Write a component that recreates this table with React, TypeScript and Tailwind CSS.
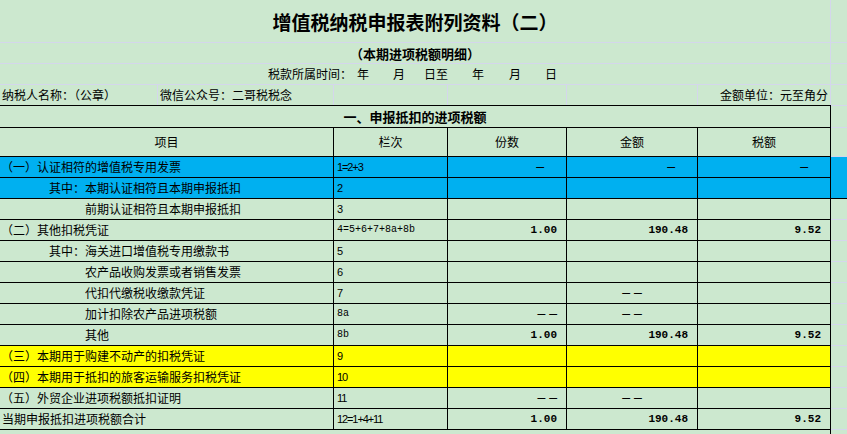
import React from "react";

type Cell = { k: "num"; v: string } | { k: "d1" } | { k: "d2r" } | { k: "d2c" } | null;

type Row = {
  label: string;
  pad: string;
  code: string;
  mono?: boolean;
  f?: Cell;
  j?: Cell;
  s?: Cell;
  bg?: "blue" | "yellow";
};

const rows: Row[] = [
  { label: "（一）认证相符的增值税专用发票", pad: "pl-[1px]", code: "1=2+3", f: { k: "d1" }, j: { k: "d1" }, s: { k: "d1" }, bg: "blue" },
  { label: "其中：本期认证相符且本期申报抵扣", pad: "pl-[49px]", code: "2", bg: "blue" },
  { label: "前期认证相符且本期申报抵扣", pad: "pl-[85px]", code: "3" },
  { label: "（二）其他扣税凭证", pad: "pl-[1px]", code: "4=5+6+7+8a+8b", mono: true, f: { k: "num", v: "1.00" }, j: { k: "num", v: "190.48" }, s: { k: "num", v: "9.52" } },
  { label: "其中：海关进口增值税专用缴款书", pad: "pl-[49px]", code: "5" },
  { label: "农产品收购发票或者销售发票", pad: "pl-[85px]", code: "6" },
  { label: "代扣代缴税收缴款凭证", pad: "pl-[85px]", code: "7", j: { k: "d2c" } },
  { label: "加计扣除农产品进项税额", pad: "pl-[85px]", code: "8a", mono: true, f: { k: "d2r" }, j: { k: "d2c" } },
  { label: "其他", pad: "pl-[85px]", code: "8b", mono: true, f: { k: "num", v: "1.00" }, j: { k: "num", v: "190.48" }, s: { k: "num", v: "9.52" } },
  { label: "（三）本期用于购建不动产的扣税凭证", pad: "pl-[1px]", code: "9", bg: "yellow" },
  { label: "（四）本期用于抵扣的旅客运输服务扣税凭证", pad: "pl-[1px]", code: "10", bg: "yellow" },
  { label: "（五）外贸企业进项税额抵扣证明", pad: "pl-[1px]", code: "11", f: { k: "d2r" }, j: { k: "d2c" } },
  { label: "当期申报抵扣进项税额合计", pad: "pl-[2px]", code: "12=1+4+11", f: { k: "num", v: "1.00" }, j: { k: "num", v: "190.48" }, s: { k: "num", v: "9.52" } },
];

const GRID6 = "grid grid-cols-[334px_114px_119px_131px_133px_16px]";
const GRID7 = "grid grid-cols-[158px_176px_114px_119px_131px_133px_16px]";

function alignFor(c?: Cell) {
  if (!c) return "";
  if (c.k === "num") return "justify-end pr-[9px]";
  if (c.k === "d1") return "justify-end pr-[22px]";
  if (c.k === "d2r") return "justify-end pr-[9px]";
  return "justify-center";
}

function Val({ c }: { c?: Cell }) {
  if (!c) return null;
  if (c.k === "num")
    return <span className="font-['Liberation_Mono',monospace] font-bold text-[11px] leading-none">{c.v}</span>;
  if (c.k === "d1")
    return <span className="font-['Liberation_Mono',monospace] text-[13px] leading-none">—</span>;
  return (
    <span className="font-['Liberation_Mono',monospace] text-[13px] leading-none tracking-[4px] -mr-[4px]">——</span>
  );
}

export default function App() {
  return (
    <div className="w-[847px] h-[434px] overflow-hidden bg-[#cce8cf] text-black font-['Noto_Sans_CJK_SC',sans-serif] text-[12px] leading-none">
      {/* Title */}
      <div className={GRID6}>
        <div className="col-span-5 h-[43px] border-b border-r border-[#d4d6ec] flex items-center justify-center">
          <span className="text-[19px] font-bold">增值税纳税申报表附列资料（二）</span>
        </div>
        <div className="h-[43px] border-b border-[#d4d6ec]" />
      </div>
      {/* Subtitle */}
      <div className={GRID6}>
        <div className="col-span-5 h-[21px] border-b border-r border-[#d4d6ec] flex items-center justify-center">
          <span className="text-[13px] font-bold">（本期进项税额明细）</span>
        </div>
        <div className="h-[21px] border-b border-[#d4d6ec]" />
      </div>
      {/* Period */}
      <div className={GRID6}>
        <div className="col-span-5 h-[21px] border-b border-r border-[#d4d6ec] flex items-center pl-[268px]">
          <span>税款所属时间：</span>
          <span className="ml-[5px]">年</span>
          <span className="ml-[24px]">月</span>
          <span className="ml-[19px]">日至</span>
          <span className="ml-[24px]">年</span>
          <span className="ml-[25px]">月</span>
          <span className="ml-[24px]">日</span>
        </div>
        <div className="h-[21px] border-b border-[#d4d6ec]" />
      </div>
      {/* Taxpayer row */}
      <div className={GRID7}>
        <div className="h-[20px] border-r border-[#d4d6ec] flex items-center pl-[2px] whitespace-nowrap">纳税人名称：（公章）</div>
        <div className="h-[20px] border-r border-[#d4d6ec] flex items-center pl-[2px] whitespace-nowrap">微信公众号：二哥税税念</div>
        <div className="h-[20px] border-r border-[#d4d6ec]" />
        <div className="h-[20px] border-r border-[#d4d6ec]" />
        <div className="h-[20px] border-r border-[#d4d6ec]" />
        <div className="h-[20px] border-r border-[#d4d6ec] flex items-center justify-end pr-[2px] whitespace-nowrap">金额单位：元至角分</div>
        <div className="h-[20px]" />
      </div>
      {/* Section header */}
      <div className={GRID6}>
        <div className="col-span-5 h-[23px] border-t border-b border-r border-black flex items-center justify-center">
          <span className="text-[13px] font-bold">一、申报抵扣的进项税额</span>
        </div>
        <div className="h-[23px] border-t border-b border-[#d4d6ec]" />
      </div>
      {/* Column header */}
      <div className={GRID6}>
        {["项目", "栏次", "份数", "金额", "税额"].map((t) => (
          <div key={t} className="h-[29px] border-b border-r border-black flex items-center justify-center">
            {t}
          </div>
        ))}
        <div className="h-[29px] border-b border-[#d4d6ec]" />
      </div>
      {/* Data rows */}
      {rows.map((r, i) => {
        const bg = r.bg === "blue" ? "bg-[#00b0f0]" : r.bg === "yellow" ? "bg-[#ffff00]" : "";
        const strip =
          r.bg === "blue"
            ? i === 0
              ? "bg-[#00b0f0]"
              : "bg-[#00b0f0] border-b border-black"
            : "border-b border-[#d4d6ec]";
        return (
          <div key={i} className={GRID6}>
            <div className={`h-[21px] border-b border-r border-black flex items-center whitespace-nowrap ${r.pad} ${bg}`}>
              {r.label}
            </div>
            <div className={`h-[21px] border-b border-r border-black flex items-center pl-[3px] ${bg}`}>
              {r.mono ? (
                <span className="font-['Liberation_Mono',monospace] text-[10px]">{r.code}</span>
              ) : (
                <span className="font-['Liberation_Sans',sans-serif] text-[11px] tracking-[-1.1px]">{r.code}</span>
              )}
            </div>
            <div className={`h-[21px] border-b border-r border-black flex items-center ${alignFor(r.f)} ${bg}`}>
              <Val c={r.f} />
            </div>
            <div className={`h-[21px] border-b border-r border-black flex items-center ${alignFor(r.j)} ${bg}`}>
              <Val c={r.j} />
            </div>
            <div className={`h-[21px] border-b border-r border-black flex items-center ${alignFor(r.s)} ${bg}`}>
              <Val c={r.s} />
            </div>
            <div className={`h-[21px] ${strip}`} />
          </div>
        );
      })}
      {/* Trailing */}
      <div className={GRID6}>
        <div className="col-span-5 h-[5px] border-r border-black" />
        <div className="h-[5px]" />
      </div>
    </div>
  );
}
